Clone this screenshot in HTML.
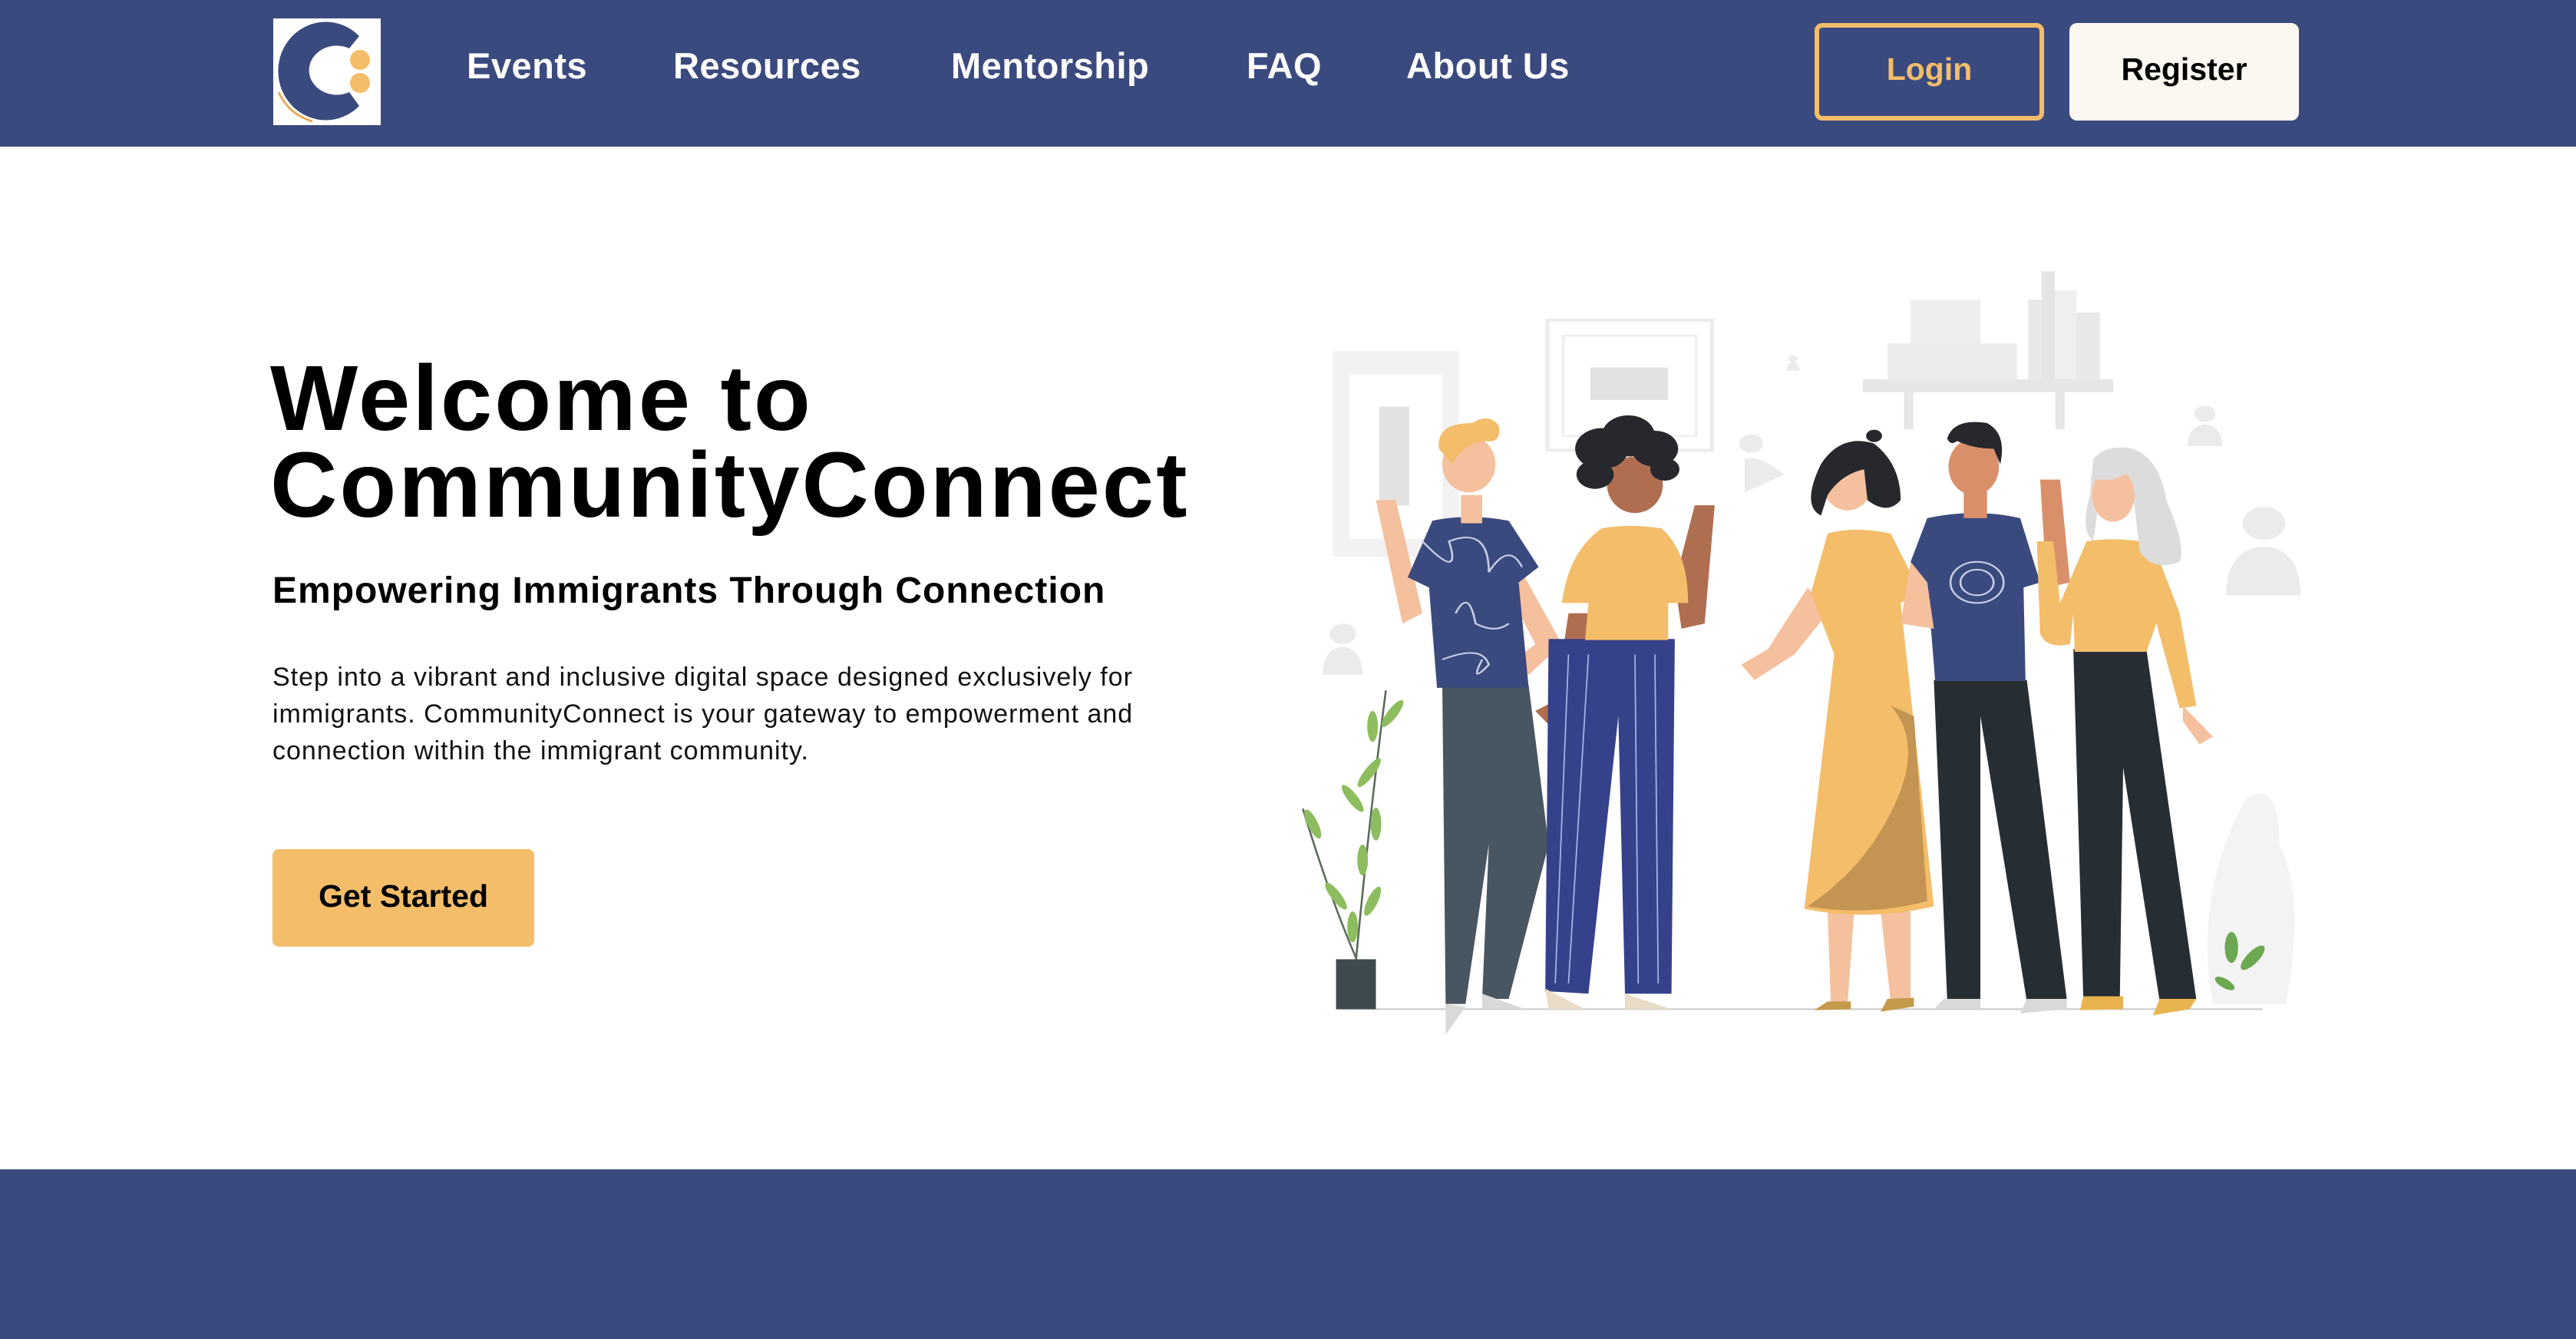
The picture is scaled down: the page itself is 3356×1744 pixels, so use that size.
<!DOCTYPE html>
<html><head><meta charset="utf-8">
<style>
*{margin:0;padding:0;box-sizing:border-box}
html,body{width:3356px;height:1744px;overflow:hidden;background:#fff;font-family:"Liberation Sans",sans-serif}
.hdr{position:absolute;left:0;top:0;width:3356px;height:191px;background:#3b4a7e}
.logo{position:absolute;left:356px;top:24px;width:140px;height:139px;background:#fff}
.nav{position:absolute;top:58px;color:#fff;font-weight:bold;font-size:47px;line-height:56px;letter-spacing:0.5px}
.btn{position:absolute;display:flex;align-items:center;justify-content:center;font-weight:bold;font-size:41px;border-radius:10px}
.login{left:2364px;top:30px;width:299px;height:127px;border:6px solid #f3bd6a;color:#f3bd6a;padding-bottom:6px}
.reg{left:2696px;top:30px;width:299px;height:127px;background:#fdf7f1;color:#000;padding-bottom:6px}
h1{position:absolute;left:352px;top:462px;font-size:121px;line-height:113px;font-weight:bold;color:#000;letter-spacing:3px}
h2{position:absolute;left:355px;top:742px;font-size:48px;font-weight:bold;color:#000;white-space:nowrap;letter-spacing:1px}
p{position:absolute;left:355px;top:858px;font-size:34px;line-height:48px;color:#111;white-space:nowrap;letter-spacing:1px}
.gs{left:355px;top:1106px;width:341px;height:127px;background:#f3bd6a;color:#000;border-radius:8px;padding-bottom:4px}
.ftr{position:absolute;left:0;top:1523px;width:3356px;height:221px;background:#3b4a7e}
svg.ill{position:absolute;left:1680px;top:330px;width:1350px;height:1050px}
</style></head><body>
<div class="hdr">
 <div class="logo"><svg width="140" height="139" viewBox="0 0 140 139">
  <path d="M112 23 A62 64 0 1 0 112 114 L99 96 A36 32 0 1 1 99 39 Z" fill="#3b4a7e"/>
  <circle cx="113" cy="54" r="13" fill="#f3bd6a"/><circle cx="113" cy="84" r="13" fill="#f3bd6a"/>
  <path d="M7 96 Q20 125 51 134" stroke="#e8ac55" stroke-width="3" fill="none"/>
 </svg></div>
 <div class="nav" style="left:608px">Events</div>
 <div class="nav" style="left:877px">Resources</div>
 <div class="nav" style="left:1239px">Mentorship</div>
 <div class="nav" style="left:1624px">FAQ</div>
 <div class="nav" style="left:1832px">About Us</div>
 <div class="btn login">Login</div>
 <div class="btn reg">Register</div>
</div>
<h1>Welcome to<br>CommunityConnect</h1>
<h2>Empowering Immigrants Through Connection</h2>
<p>Step into a vibrant and inclusive digital space designed exclusively for<br>immigrants. CommunityConnect is your gateway to empowerment and<br>connection within the immigrant community.</p>
<div class="btn gs">Get Started</div>

<svg class="ill" viewBox="0 0 1560 1568" preserveAspectRatio="none">
 <rect x="65" y="190" width="190" height="400" fill="#f2f2f2"/>
 <rect x="90" y="235" width="140" height="320" fill="#fff"/>
 <rect x="135" y="298" width="45" height="192" fill="#e2e2e2"/>
 <rect x="388" y="130" width="248" height="253" fill="none" stroke="#ececec" stroke-width="6"/>
 <rect x="412" y="160" width="200" height="195" fill="none" stroke="#efefef" stroke-width="4"/>
 <rect x="453" y="222" width="117" height="63" fill="#e2e2e2"/>
 <rect x="863" y="245" width="377" height="25" fill="#e6e6e6"/>
 <rect x="925" y="270" width="14" height="72" fill="#e6e6e6"/><rect x="1153" y="270" width="14" height="72" fill="#e6e6e6"/>
 <rect x="900" y="175" width="195" height="70" fill="#ececec"/>
 <rect x="935" y="90" width="105" height="85" fill="#eeeeee"/>
 <rect x="1112" y="90" width="40" height="155" fill="#e8e8e8"/>
 <rect x="1132" y="35" width="20" height="210" fill="#e4e4e4"/>
 <rect x="1152" y="72" width="33" height="173" fill="#efefef"/>
 <rect x="1185" y="115" width="35" height="130" fill="#e8e8e8"/>
 <g fill="#ebebeb">
  <circle cx="1467" cy="525" r="32"/><path d="M1410 665 Q1410 575 1467 570 Q1522 575 1522 665Z"/>
  <circle cx="1378" cy="312" r="16"/><path d="M1352 375 Q1352 335 1378 333 Q1404 335 1404 375Z"/>
  <circle cx="80" cy="740" r="20"/><path d="M50 820 Q50 770 80 765 Q110 770 110 820Z"/>
  <circle cx="695" cy="370" r="18"/><path d="M685 465 L685 400 Q705 390 745 430Z"/>
  <circle cx="758" cy="205" r="7"/><path d="M748 228 Q750 212 758 212 Q766 212 768 228Z"/>
  <path d="M1390 1460 Q1360 1250 1440 1060 Q1490 1020 1490 1150 Q1530 1250 1500 1460Z" fill="#f3f3f3"/>
 </g>
 <line x1="70" y1="1470" x2="1465" y2="1470" stroke="#c9c9c9" stroke-width="3"/>
 <path d="M145 850 Q120 1100 100 1375" stroke="#5a6a5a" stroke-width="3" fill="none"/>
 <path d="M20 1080 Q60 1250 100 1370" stroke="#5a6a5a" stroke-width="3" fill="none"/>
 <g fill="#8dbd5f"><ellipse cx="125" cy="920" rx="8" ry="30"/><ellipse cx="155" cy="895" rx="8" ry="30" transform="rotate(30 155 895)"/><ellipse cx="120" cy="1010" rx="8" ry="32" transform="rotate(30 120 1010)"/><ellipse cx="95" cy="1060" rx="8" ry="30" transform="rotate(-30 95 1060)"/><ellipse cx="130" cy="1110" rx="8" ry="32"/><ellipse cx="110" cy="1180" rx="8" ry="30"/><ellipse cx="35" cy="1110" rx="8" ry="30" transform="rotate(-20 35 1110)"/><ellipse cx="70" cy="1250" rx="8" ry="30" transform="rotate(-30 70 1250)"/><ellipse cx="125" cy="1260" rx="8" ry="30" transform="rotate(20 125 1260)"/><ellipse cx="95" cy="1310" rx="8" ry="30"/></g>
 <rect x="70" y="1373" width="60" height="97" fill="#3e4a4f"/>
 <g fill="#6ba84f"><ellipse cx="1418" cy="1350" rx="10" ry="30"/><ellipse cx="1450" cy="1370" rx="10" ry="28" transform="rotate(35 1450 1370)"/><ellipse cx="1408" cy="1420" rx="8" ry="18" transform="rotate(-50 1408 1420)"/></g>
 <path d="M130 480 L160 480 L200 700 L170 720Z" fill="#f5c09e"/>
 <path d="M350 620 L410 760 L360 820 L340 790 L370 760 L330 660Z" fill="#f5c09e"/>
 <path d="M230 840 L360 840 L390 1150 L330 1450 L290 1450 L300 1150 L265 1460 L235 1460Z" fill="#475660"/>
 <path d="M215 520 Q270 505 330 520 L375 610 L345 640 L360 845 L222 845 L210 650 L178 630Z" fill="#3b4a7e"/>
 <g stroke="#c9d0e8" stroke-width="3" fill="none"><path d="M200 560 Q260 640 240 560 Q300 530 300 620 Q330 560 350 610"/><path d="M230 790 Q290 760 300 800 Q270 840 290 790"/><path d="M250 700 Q270 650 280 720 Q310 740 330 720"/></g>
 <rect x="258" y="470" width="32" height="55" fill="#f5c09e"/>
 <ellipse cx="270" cy="410" rx="40" ry="55" fill="#f5c09e"/>
 <path d="M225 380 Q220 330 275 330 Q300 310 315 335 Q320 370 295 365 Q260 370 245 410Z" fill="#f3bd6a"/>
 <path d="M610 490 L640 490 L625 720 L590 730 L580 640Z" fill="#b06e50"/>
 <path d="M420 700 L460 700 L420 900 L400 930 L370 890 L400 870Z" fill="#b06e50"/>
 <path d="M390 750 L580 750 L575 1440 L505 1440 L495 900 L450 1440 L385 1435Z" fill="#35418a"/>
 <g stroke="#aab4e8" stroke-width="2"><line x1="420" y1="780" x2="400" y2="1420"/><line x1="450" y1="780" x2="420" y2="1420"/><line x1="520" y1="780" x2="525" y2="1420"/><line x1="550" y1="780" x2="555" y2="1420"/></g>
 <path d="M470 535 Q510 525 560 535 Q600 580 600 680 L570 680 L570 752 L445 752 L450 680 L410 680 Q420 580 470 535Z" fill="#f3bd6a"/>
 <ellipse cx="520" cy="450" rx="42" ry="55" fill="#b06e50"/>
 <g fill="#26282e"><circle cx="470" cy="380" r="40"/><circle cx="510" cy="355" r="40"/><circle cx="550" cy="380" r="35"/><circle cx="460" cy="430" r="28"/><circle cx="565" cy="420" r="22"/></g>
 <path d="M780 650 L810 700 L760 780 L700 830 L680 800 L720 770Z" fill="#f5c09e"/>
 <path d="M810 1280 L850 1280 L840 1460 L815 1460Z M890 1280 L935 1280 L935 1455 L905 1455Z" fill="#f5c09e"/>
 <path d="M810 545 Q850 530 905 545 L950 660 L920 680 L970 1270 Q870 1300 775 1275 L820 780 L785 660Z" fill="#f3bd6a"/>
 <path d="M905 880 Q960 960 900 1100 Q860 1200 780 1270 Q870 1290 960 1260 L940 900Z" fill="#c49452"/>
 <ellipse cx="840" cy="445" rx="38" ry="55" fill="#f5c09e"/>
 <path d="M800 410 Q830 350 880 370 Q920 410 920 480 Q900 510 870 480 L865 420 Q830 430 810 470 L800 510 Q770 490 800 410Z" fill="#26282e"/>
 <circle cx="880" cy="355" r="12" fill="#26282e"/>
 <path d="M1130 440 L1160 440 L1175 640 L1140 650Z" fill="#d9906a"/>
 <path d="M970 830 L1110 830 L1170 1450 L1110 1455 L1040 900 L1040 1450 L990 1450Z" fill="#272e33"/>
 <path d="M960 515 Q1030 495 1100 515 L1130 640 L1105 650 L1108 832 L972 832 L960 640 L935 600Z" fill="#3b4a7e"/>
 <g fill="none" stroke="#c9d0e8" stroke-width="3"><circle cx="1035" cy="640" r="40"/><circle cx="1035" cy="640" r="25"/></g>
 <path d="M935 600 L960 640 L970 730 L920 720Z" fill="#f5c09e"/>
 <ellipse cx="1030" cy="415" rx="38" ry="55" fill="#d9906a"/>
 <rect x="1015" y="460" width="35" height="55" fill="#d9906a"/>
 <path d="M990 360 Q1000 320 1050 330 Q1080 350 1070 410 L1060 380 Q1030 380 1005 365 Q995 375 990 360Z" fill="#26282e"/>
 <path d="M1180 770 L1290 770 L1365 1450 L1310 1455 L1255 1000 L1250 1450 L1195 1450Z" fill="#272e33"/>
 <path d="M1200 560 Q1250 550 1300 565 L1340 700 L1365 880 L1340 885 L1305 720 L1290 775 L1182 775 L1180 700 L1175 760 Q1140 770 1130 740 L1125 560 L1150 560 L1160 680Z" fill="#f3bd6a"/>
 <path d="M1210 400 Q1230 370 1270 380 Q1310 400 1320 480 Q1350 570 1340 600 Q1300 620 1280 580 L1270 470 Q1240 440 1220 470 L1210 560 Q1190 540 1205 470Z" fill="#dcdcdc"/>
 <ellipse cx="1240" cy="470" rx="32" ry="52" fill="#f5c09e"/>
 <path d="M1205 440 Q1230 385 1275 420 L1240 440Z" fill="#dcdcdc"/>
 <path d="M1345 880 L1390 940 L1370 955 L1345 910Z" fill="#f5c09e"/>
 <g fill="#d9d9d9"><path d="M290 1440 L355 1470 L290 1470Z"/><path d="M235 1460 L265 1465 L235 1520Z"/><path d="M385 1430 L445 1470 L390 1470Z" fill="#e9dcc9"/><path d="M505 1440 L575 1470 L505 1470Z" fill="#e9dcc9"/><path d="M985 1450 L1040 1450 L1040 1470 L970 1470Z"/><path d="M1110 1450 L1170 1450 L1170 1470 L1100 1478Z"/></g>
 <g fill="#c49a4a"><path d="M810 1455 L845 1455 L845 1470 L790 1472Z"/><path d="M900 1450 L940 1448 L940 1465 L890 1475Z"/><path d="M1195 1445 L1255 1445 L1255 1470 L1190 1472Z" fill="#e9b450"/><path d="M1310 1450 L1365 1450 L1355 1470 L1300 1482Z" fill="#e9b450"/></g>
</svg>

<div class="ftr"></div>
</body></html>
